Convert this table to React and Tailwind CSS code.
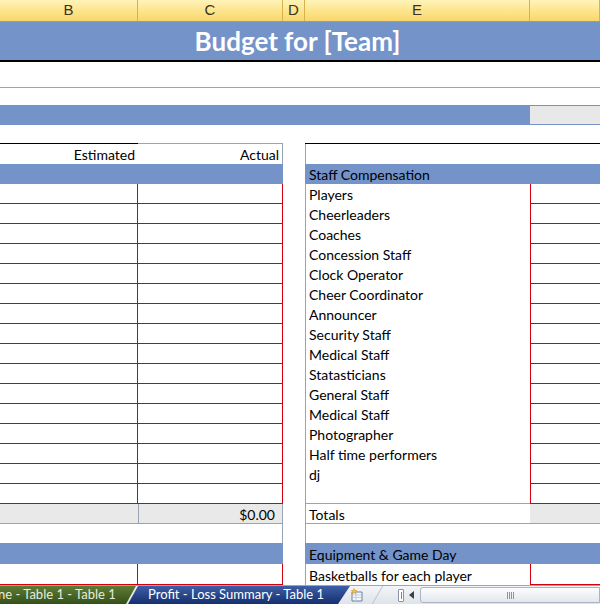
import React from 'react'

const staff = [
  'Players',
  'Cheerleaders',
  'Coaches',
  'Concession Staff',
  'Clock Operator',
  'Cheer Coordinator',
  'Announcer',
  'Security Staff',
  'Medical Staff',
  'Statasticians',
  'General Staff',
  'Medical Staff',
  'Photographer',
  'Half time performers',
  'dj',
  '',
]

const cell = "font-['Lato',sans-serif] text-[14px] text-black leading-none pt-[2px]"

function ColHeader() {
  const cols = [
    ['B', 'w-[138px]'],
    ['C', 'w-[145px]'],
    ['D', 'w-[22px]'],
    ['E', 'w-[225px]'],
    ['', 'w-[70px]'],
  ]
  return (
    <div className="flex h-[22px] border-b border-[#c29a3a] bg-gradient-to-b from-[#fef3b8] via-[#fde58e] to-[#f9d66c]">
      {cols.map(([l, w], i) => (
        <div
          key={i}
          className={`${w} flex items-center justify-center border-r border-[#d8b04c] font-['Liberation_Sans',sans-serif] text-[15px] text-[#3a3320]`}
        >
          {l}
        </div>
      ))}
    </div>
  )
}

function DataRow({ label, h = 'h-[20px]', last = false }) {
  return (
    <div className={`flex ${h}`}>
      <div className="w-[138px] border-b border-r border-[#d0000c]" />
      <div className="w-[145px] border-b border-r border-[#d0000c]" />
      <div className="w-[22px]" />
      <div className={`w-[225px] border-l border-[#98a3b3] flex items-center pl-[3px] ${last ? 'border-b' : ''} ${cell}`}>{label}</div>
      <div className="w-[70px] border-b border-l border-[#d0000c]" />
    </div>
  )
}

function SheetIcon() {
  return (
    <svg width="16" height="14" viewBox="0 0 16 14">
      <path d="M3 4 L13 4 L13 13 L3 13 Z" fill="#f4f7fb" stroke="#6b7f9e" strokeWidth="1" />
      <path d="M4 7 H12 M4 9.5 H12 M7 4 V13" stroke="#b9c6da" strokeWidth="0.8" />
      <path d="M5 0.5 L5.8 2.4 L7.8 2.6 L6.3 3.9 L6.8 5.8 L5 4.8 L3.2 5.8 L3.7 3.9 L2.2 2.6 L4.2 2.4 Z" fill="#f5c53a" stroke="#c9951a" strokeWidth="0.5" />
    </svg>
  )
}

function TabBar() {
  return (
    <div className="flex h-[19px] items-stretch bg-gradient-to-b from-[#f3f5f8] to-[#dfe4ea] border-t border-[#9aa6b8]">
      <div className="relative w-[136px] shrink-0 -mr-[8px] bg-gradient-to-b from-[#5f7d34] to-[#34501a] [clip-path:polygon(0_0,100%_0,calc(100%-10px)_100%,0_100%)] flex items-center font-['Lato',sans-serif] text-[13px] text-[#e8ecdc] whitespace-nowrap overflow-hidden">
        <span className="-ml-[2px]">ne - Table 1 - Table 1</span>
      </div>
      <div className="relative w-[222px] shrink-0 bg-gradient-to-b from-[#3e5ea6] to-[#16306f] [clip-path:polygon(10px_0,calc(100%-10px)_0,100%_0,calc(100%-12px)_100%,0_100%)] flex items-center pl-[20px] font-['Lato',sans-serif] text-[13px] text-white whitespace-nowrap">
        Profit - Loss Summary - Table 1
      </div>
      <div className="w-[30px] shrink-0 -ml-[8px] flex items-center justify-center">
        <SheetIcon />
      </div>
      <div className="w-[6px] shrink-0 border-r border-[#b9c2ce] [transform:skewX(-30deg)]" />
      <div className="w-[20px] shrink-0" />
      <div className="flex items-center">
        <div className="w-[6px] h-[13px] border border-[#8a94a4] bg-white rounded-[1px] flex items-center justify-center">
          <div className="w-[1px] h-[7px] bg-[#7a8494]" />
        </div>
      </div>
      <div className="w-[16px] flex items-center justify-center">
        <svg width="6" height="8" viewBox="0 0 6 8">
          <path d="M5 0 L0 4 L5 8 Z" fill="#3b3f46" />
        </svg>
      </div>
      <div className="flex-1 my-[1px] rounded-l-[3px] border border-[#a9b3c1] bg-gradient-to-b from-[#fbfcfd] to-[#e3e8ee] flex items-center justify-center">
        <div className="flex gap-[1px]">
          {[0, 1, 2, 3].map(i => (
            <div key={i} className="w-[1px] h-[7px] bg-[#8893a3]" />
          ))}
        </div>
      </div>
    </div>
  )
}

export default function App() {
  return (
    <div className="w-[600px] h-[604px] overflow-hidden bg-white">
      <ColHeader />

      {/* title band */}
      <div className="h-[38px] bg-[#7393c9] flex items-center justify-center font-['Lato',sans-serif] font-bold text-[26px] text-white pr-[5px]">
        Budget for [Team]
      </div>
      <div className="h-[2px] bg-black" />

      <div className="h-[26px] border-b border-[#98a3b3]" />
      <div className="h-[17px]" />

      <div className="flex h-[20px]">
        <div className="w-[530px] bg-[#7393c9]" />
        <div className="w-[70px] bg-[#7393c9] py-[1px]">
          <div className="h-full bg-[#e8e8e8]" />
        </div>
      </div>

      <div className="flex h-[19px]">
        <div className="w-[138px] border-b border-black" />
        <div className="w-[145px] border-b border-[#98a3b3]" />
        <div className="w-[22px]" />
        <div className="w-[295px] border-b border-black" />
      </div>

      <div className="flex h-[20px]">
        <div className={`w-[138px] flex items-center justify-end pr-[3px] ${cell}`}>Estimated</div>
        <div className={`w-[145px] border-r border-[#98a3b3] flex items-center justify-end pr-[3px] ${cell}`}>Actual</div>
        <div className="w-[22px]" />
        <div className="w-[225px] border-l border-[#98a3b3]" />
        <div className="w-[70px]" />
      </div>

      <div className="flex h-[20px]">
        <div className="w-[283px] bg-[#7393c9]" />
        <div className="w-[22px]" />
        <div className={`w-[295px] bg-[#7393c9] flex items-center pl-[4px] ${cell} text-[#eef2fa]`}>Staff Compensation</div>
      </div>

      {staff.map((s, i) => (
        <DataRow key={i} label={s} last={i === staff.length - 1} />
      ))}

      <div className="flex h-[20px]">
        <div className="w-[138px] bg-[#e9e9e9] border-b border-[#98a3b3]" />
        <div className={`w-[145px] bg-[#e9e9e9] border-b border-l border-r border-[#98a3b3] flex items-center justify-end pr-[7px] ${cell}`}>$0.00</div>
        <div className="w-[22px]" />
        <div className={`w-[225px] border-l border-b border-[#98a3b3] flex items-center pl-[3px] ${cell}`}>Totals</div>
        <div className="w-[70px] bg-[#e9e9e9] border-b border-[#98a3b3]" />
      </div>

      <div className="flex h-[19px]">
        <div className="w-[138px]" />
        <div className="w-[145px] border-r border-[#98a3b3]" />
        <div className="w-[22px]" />
        <div className="w-[225px] border-l border-[#98a3b3]" />
        <div className="w-[70px]" />
      </div>

      <div className="flex h-[21px]">
        <div className="w-[283px] bg-[#7393c9]" />
        <div className="w-[22px]" />
        <div className={`w-[295px] bg-[#7393c9] flex items-center pl-[4px] ${cell} text-[#eef2fa]`}>Equipment &amp; Game Day</div>
      </div>

      <DataRow label="Basketballs for each player" h="h-[21px]" />

      <TabBar />
    </div>
  )
}
